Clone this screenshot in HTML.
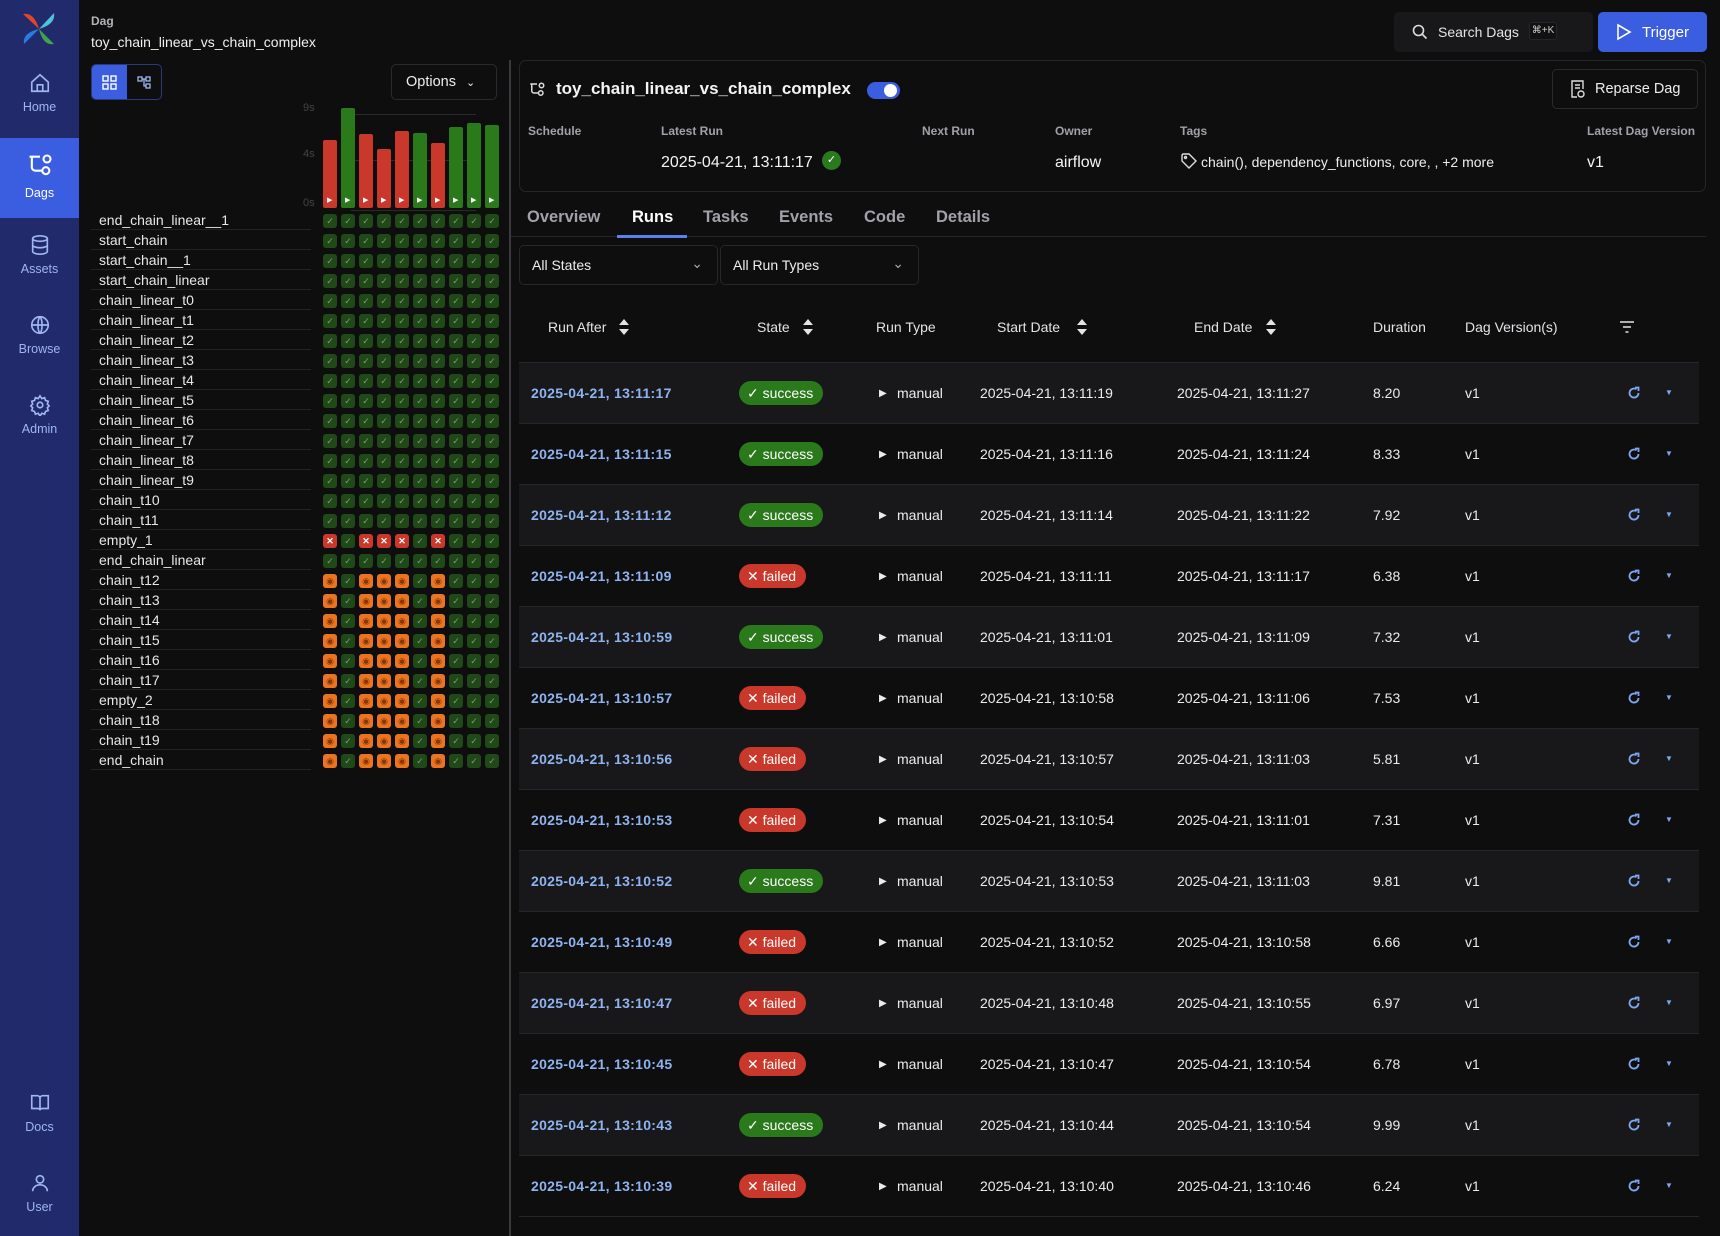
<!DOCTYPE html>
<html><head><meta charset="utf-8">
<style>
*{box-sizing:border-box;margin:0;padding:0}
body{width:1720px;height:1236px;overflow:hidden;background:#0e0e0f;font-family:"Liberation Sans",sans-serif;color:#e4e4e7;position:relative}
.abs{position:absolute}
.side{position:absolute;left:0;top:0;width:79px;height:1236px;background:#212a6a}
.nav{position:absolute;left:0;width:79px;text-align:center;color:#9fb6f2;font-size:12.5px}
.nav svg{display:block;margin:0 auto 6px}
.nav.act{background:#3b5de0;color:#fff;height:80px;top:138px;padding-top:14px}
.names div{position:absolute;left:91px;width:220px;height:20px;border-bottom:1px solid #222;font-size:14px;line-height:20px;padding-left:8px;color:#e8e8e8}
.grid i{position:absolute;width:14px;height:14px;border-radius:3px;font-style:normal;font-size:9px;line-height:14px;text-align:center}
.s{background:#1f4a17;color:#7d9a7a}
.f{background:#c9382b;color:#fff;font-weight:bold}
.o{background:#ea7422;color:#8a3505}
.lab{font-size:12px;color:#a1a1aa;font-weight:bold;position:absolute;top:124px}
.val{font-size:16px;color:#f4f4f5;position:absolute;top:154px}
.tab{position:absolute;top:208px;font-size:16.5px;font-weight:bold;color:#a1a1aa}
.sel{position:absolute;top:245px;height:40px;border:1px solid #27272a;border-radius:5px;font-size:14px;color:#eee;padding:11px 12px}
.th{position:absolute;top:319px;font-size:14px;color:#e4e4e7}
.row{position:absolute;left:519px;width:1180px;height:61px;border-bottom:1px solid #26262a}
.row.a{background:#18181b}
.row span{position:absolute;top:22px;font-size:14px;color:#ececec}
.row .ra{left:12px;color:#8fb3ef;font-weight:bold;letter-spacing:.3px}
.b{position:absolute;top:18px;height:24px;border-radius:12px;font-size:14px;color:#fff;padding:4px 10px 0 8px;line-height:16px}
.bs{background:#2a7a1c}.bf{background:#c9382b}
</style></head><body>
<div class="side">
<svg class="abs" style="left:20px;top:10px" width="38" height="38" viewBox="0 0 38 38"><path d="M19 19 L3 4 Q14 2 19 19Z" fill="#e0452b"/><path d="M19 19 L34 3 Q36 14 19 19Z" fill="#4fc3d9"/><path d="M19 19 L34 34 Q23 36 19 19Z" fill="#3fa34d"/><path d="M19 19 L4 34 Q2 23 19 19Z" fill="#2a7be0"/></svg>
<div class="nav" style="top:72px"><svg width="22" height="22" viewBox="0 0 24 24" fill="none" stroke="#9fb6f2" stroke-width="1.8"><path d="M3 11 L12 3 L21 11 V21 H3Z"/><path d="M9 21V14h6v7"/></svg>Home</div>
<div class="nav act"><svg width="28" height="28" viewBox="0 0 24 24" fill="none" stroke="#fff" stroke-width="1.8"><path d="M3 4h9M5 4v9a3 3 0 0 0 3 3h6"/><circle cx="18" cy="6" r="3"/><circle cx="17" cy="16" r="3"/></svg>Dags</div>
<div class="nav" style="top:234px"><svg width="22" height="22" viewBox="0 0 24 24" fill="none" stroke="#9fb6f2" stroke-width="1.8"><ellipse cx="12" cy="5" rx="8" ry="3"/><path d="M4 5v14c0 1.7 3.6 3 8 3s8-1.3 8-3V5M4 12c0 1.7 3.6 3 8 3s8-1.3 8-3"/></svg>Assets</div>
<div class="nav" style="top:314px"><svg width="22" height="22" viewBox="0 0 24 24" fill="none" stroke="#9fb6f2" stroke-width="1.8"><circle cx="12" cy="12" r="9"/><path d="M3 12h18M12 3c3 3 3 15 0 18M12 3c-3 3-3 15 0 18"/></svg>Browse</div>
<div class="nav" style="top:394px"><svg width="22" height="22" viewBox="0 0 24 24" fill="none" stroke="#9fb6f2" stroke-width="1.8"><circle cx="12" cy="12" r="3"/><path d="M12 2l2 3 3-1 1 3 3 1-1 3 2 2-2 2 1 3-3 1-1 3-3-1-2 3-2-3-3 1-1-3-3-1 1-3-2-2 2-2-1-3 3-1 1-3 3 1z"/></svg>Admin</div>
<div class="nav" style="top:1092px"><svg width="22" height="22" viewBox="0 0 24 24" fill="none" stroke="#9fb6f2" stroke-width="1.8"><path d="M3 4h6a3 3 0 0 1 3 3v13a2 2 0 0 0-2-2H3zM21 4h-6a3 3 0 0 0-3 3v13a2 2 0 0 1 2-2h7z"/></svg>Docs</div>
<div class="nav" style="top:1172px"><svg width="22" height="22" viewBox="0 0 24 24" fill="none" stroke="#9fb6f2" stroke-width="1.8"><circle cx="12" cy="8" r="4"/><path d="M4 21c0-4 3.6-7 8-7s8 3 8 7"/></svg>User</div>
</div>

<div class="abs" style="left:91px;top:14px;font-size:12px;font-weight:bold;color:#b4b4b8">Dag</div>
<div class="abs" style="left:91px;top:34px;font-size:14px;color:#f0f0f0">toy_chain_linear_vs_chain_complex</div>

<div class="abs" style="left:91px;top:64px;width:71px;height:36px;border:1px solid #2a3a7a;border-radius:5px;overflow:hidden">
<div class="abs" style="left:0;top:0;width:35px;height:36px;background:#3b5de0"></div>
<svg class="abs" style="left:10px;top:10px" width="15" height="15" viewBox="0 0 15 15" fill="none" stroke="#fff" stroke-width="1.4"><rect x="1" y="1" width="5" height="5"/><rect x="9" y="1" width="5" height="5"/><rect x="1" y="9" width="5" height="5"/><rect x="9" y="9" width="5" height="5"/></svg>
<svg class="abs" style="left:45px;top:11px" width="15" height="14" viewBox="0 0 15 14" fill="none" stroke="#9fb6f2" stroke-width="1.3"><rect x="1" y="1" width="4" height="4"/><rect x="9" y="1" width="4" height="4"/><rect x="9" y="8" width="4" height="4"/><path d="M5 3h4M7 3v7h2"/></svg>
</div>
<div class="abs" style="left:391px;top:64px;width:106px;height:36px;border:1px solid #2a2a2e;border-radius:5px;font-size:14.5px;padding:9px 0 0 14px;color:#eee">Options <span style="font-size:11px;margin-left:6px">&#8964;</span></div>

<div class="abs" style="left:303px;top:102px;font-size:11px;color:#444">9s</div>
<div class="abs" style="left:303px;top:148px;font-size:11px;color:#444">4s</div>
<div class="abs" style="left:303px;top:197px;font-size:11px;color:#444">0s</div>
<div class="abs" style="left:351px;top:114px;width:125px;height:1px;background:#2a2a2a"></div>
<div class="abs" style="left:351px;top:160px;width:125px;height:1px;background:#2a2a2a"></div>
<div class="abs" style="left:351px;top:210px;width:125px;height:1px;background:#2a2a2a"></div>
<div class="abs" style="left:323px;top:140px;width:14px;height:68px;background:#c9382b;border-radius:2px"></div>
<div class="abs" style="left:341px;top:108px;width:14px;height:100px;background:#2a7a1c;border-radius:2px"></div>
<div class="abs" style="left:359px;top:134px;width:14px;height:74px;background:#c9382b;border-radius:2px"></div>
<div class="abs" style="left:377px;top:149px;width:14px;height:59px;background:#c9382b;border-radius:2px"></div>
<div class="abs" style="left:395px;top:131px;width:14px;height:77px;background:#c9382b;border-radius:2px"></div>
<div class="abs" style="left:413px;top:133px;width:14px;height:75px;background:#2a7a1c;border-radius:2px"></div>
<div class="abs" style="left:431px;top:143px;width:14px;height:65px;background:#c9382b;border-radius:2px"></div>
<div class="abs" style="left:449px;top:127px;width:14px;height:81px;background:#2a7a1c;border-radius:2px"></div>
<div class="abs" style="left:467px;top:123px;width:14px;height:85px;background:#2a7a1c;border-radius:2px"></div>
<div class="abs" style="left:485px;top:125px;width:14px;height:83px;background:#2a7a1c;border-radius:2px"></div>
<div class="abs" style="left:323px;top:196px;width:176px;font-size:7px;color:#fff;letter-spacing:0">
<span style="position:absolute;left:4px">&#9654;</span><span style="position:absolute;left:22px">&#9654;</span><span style="position:absolute;left:40px">&#9654;</span><span style="position:absolute;left:58px">&#9654;</span><span style="position:absolute;left:76px">&#9654;</span><span style="position:absolute;left:94px">&#9654;</span><span style="position:absolute;left:112px">&#9654;</span><span style="position:absolute;left:130px">&#9654;</span><span style="position:absolute;left:148px">&#9654;</span><span style="position:absolute;left:166px">&#9654;</span></div>

<div class="names">
<div style="top:210px">end_chain_linear__1</div><div style="top:230px">start_chain</div><div style="top:250px">start_chain__1</div><div style="top:270px">start_chain_linear</div><div style="top:290px">chain_linear_t0</div><div style="top:310px">chain_linear_t1</div><div style="top:330px">chain_linear_t2</div><div style="top:350px">chain_linear_t3</div><div style="top:370px">chain_linear_t4</div><div style="top:390px">chain_linear_t5</div><div style="top:410px">chain_linear_t6</div><div style="top:430px">chain_linear_t7</div><div style="top:450px">chain_linear_t8</div><div style="top:470px">chain_linear_t9</div><div style="top:490px">chain_t10</div><div style="top:510px">chain_t11</div><div style="top:530px">empty_1</div><div style="top:550px">end_chain_linear</div><div style="top:570px">chain_t12</div><div style="top:590px">chain_t13</div><div style="top:610px">chain_t14</div><div style="top:630px">chain_t15</div><div style="top:650px">chain_t16</div><div style="top:670px">chain_t17</div><div style="top:690px">empty_2</div><div style="top:710px">chain_t18</div><div style="top:730px">chain_t19</div><div style="top:750px">end_chain</div>
</div>
<div class="grid" id="grid"></div>
<script>
(function(){var g=document.getElementById('grid'),h='';
for(var r=0;r<28;r++){for(var c=0;c<10;c++){var t='s',ch='&#10003;';
if(r==16&&[0,2,3,4,6].indexOf(c)>=0){t='f';ch='&#10005;'}
if(r>=18&&[0,2,3,4,6].indexOf(c)>=0){t='o';ch='&#9673;'}
h+='<i class="'+t+'" style="left:'+(323+c*18)+'px;top:'+(214+r*20)+'px">'+ch+'</i>';}}
g.innerHTML=h;})();
</script>

<div class="abs" style="left:509px;top:60px;width:2px;height:1176px;background:#3a3a3e"></div>

<div class="abs" style="left:1394px;top:12px;width:199px;height:40px;background:#18181b;border-radius:5px"></div>
<svg class="abs" style="left:1412px;top:24px" width="16" height="16" viewBox="0 0 16 16" fill="none" stroke="#ddd" stroke-width="1.6"><circle cx="6.5" cy="6.5" r="5"/><path d="M10.5 10.5l4 4"/></svg>
<div class="abs" style="left:1438px;top:24px;font-size:14px;color:#e4e4e7">Search Dags</div>
<div class="abs" style="left:1529px;top:22px;width:28px;height:18px;background:#111;border:1px solid #26262a;border-radius:3px;font-size:10px;color:#ccc;text-align:center;line-height:16px">&#8984;+K</div>
<div class="abs" style="left:1598px;top:12px;width:109px;height:40px;background:#3b5de0;border-radius:5px"></div>
<svg class="abs" style="left:1616px;top:23px" width="16" height="18" viewBox="0 0 16 18" fill="none" stroke="#fff" stroke-width="1.6"><path d="M2 2l12 7-12 7z"/></svg>
<div class="abs" style="left:1642px;top:24px;font-size:15px;color:#fff">Trigger</div>

<div class="abs" style="left:519px;top:60px;width:1187px;height:132px;border:1px solid #26262a;border-radius:7px"></div>
<svg class="abs" style="left:528px;top:81px" width="18" height="18" viewBox="0 0 24 24" fill="none" stroke="#ddd" stroke-width="2"><path d="M3 4h9M5 4v9a3 3 0 0 0 3 3h6"/><circle cx="18" cy="6" r="3"/><circle cx="17" cy="16" r="3"/></svg>
<div class="abs" style="left:556px;top:79px;font-size:17px;font-weight:bold;color:#f4f4f5">toy_chain_linear_vs_chain_complex</div>
<div class="abs" style="left:867px;top:82px;width:33px;height:17px;background:#3b5de0;border-radius:9px"><div class="abs" style="left:17px;top:2px;width:13px;height:13px;background:#fff;border-radius:50%"></div></div>
<div class="abs" style="left:1552px;top:69px;width:146px;height:40px;border:1px solid #2a2a2e;border-radius:5px"></div>
<svg class="abs" style="left:1570px;top:80px" width="16" height="19" viewBox="0 0 16 19" fill="none" stroke="#ddd" stroke-width="1.4"><path d="M7 17H2V1h11v8"/><path d="M5 5h5M5 8h5"/><circle cx="11" cy="14" r="3"/></svg>
<div class="abs" style="left:1595px;top:81px;font-size:14.5px;color:#eee">Reparse Dag</div>
<div class="lab" style="left:528px">Schedule</div>
<div class="lab" style="left:661px">Latest Run</div>
<div class="lab" style="left:922px">Next Run</div>
<div class="lab" style="left:1055px">Owner</div>
<div class="lab" style="left:1180px">Tags</div>
<div class="lab" style="left:1587px">Latest Dag Version</div>
<div class="val" style="left:661px">2025-04-21, 13:11:17</div>
<div class="abs" style="left:822px;top:151px;width:19px;height:19px;border-radius:50%;background:#2a7a1c;color:#fff;font-size:11px;text-align:center;line-height:19px">&#10003;</div>
<div class="val" style="left:1055px">airflow</div>
<svg class="abs" style="left:1181px;top:153px" width="16" height="16" viewBox="0 0 16 16" fill="none" stroke="#ddd" stroke-width="1.4"><path d="M1 2v6l7 7 7-7-7-7H2z"/><circle cx="4.5" cy="4.5" r="1"/></svg>
<div class="abs" style="left:1201px;top:154px;font-size:14px;color:#eee">chain(), dependency_functions, core, , +2 more</div>
<div class="val" style="left:1587px">v1</div>

<div class="tab" style="left:527px">Overview</div>
<div class="tab" style="left:632px;color:#fff">Runs</div>
<div class="tab" style="left:703px">Tasks</div>
<div class="tab" style="left:779px">Events</div>
<div class="tab" style="left:864px">Code</div>
<div class="tab" style="left:936px">Details</div>
<div class="abs" style="left:511px;top:236px;width:1195px;height:1px;background:#26262a"></div>
<div class="abs" style="left:617px;top:235px;width:70px;height:3px;background:#5b82ea"></div>

<div class="sel" style="left:519px;width:199px">All States<span style="position:absolute;right:14px;top:9px;color:#aaa">&#8964;</span></div>
<div class="sel" style="left:720px;width:199px">All Run Types<span style="position:absolute;right:14px;top:9px;color:#aaa">&#8964;</span></div>

<div class="th" style="left:548px">Run After</div>
<div class="th" style="left:757px">State</div>
<div class="th" style="left:876px">Run Type</div>
<div class="th" style="left:997px">Start Date</div>
<div class="th" style="left:1194px">End Date</div>
<div class="th" style="left:1373px">Duration</div>
<div class="th" style="left:1465px">Dag Version(s)</div>
<svg class="abs" style="left:619px;top:319px" width="10" height="16" viewBox="0 0 10 16" fill="#e4e4e7"><path d="M5 0l5 6H0zM5 16l5-6H0z"/></svg>
<svg class="abs" style="left:803px;top:319px" width="10" height="16" viewBox="0 0 10 16" fill="#e4e4e7"><path d="M5 0l5 6H0zM5 16l5-6H0z"/></svg>
<svg class="abs" style="left:1077px;top:319px" width="10" height="16" viewBox="0 0 10 16" fill="#e4e4e7"><path d="M5 0l5 6H0zM5 16l5-6H0z"/></svg>
<svg class="abs" style="left:1266px;top:319px" width="10" height="16" viewBox="0 0 10 16" fill="#e4e4e7"><path d="M5 0l5 6H0zM5 16l5-6H0z"/></svg>
<svg class="abs" style="left:1620px;top:321px" width="14" height="12" viewBox="0 0 14 12" fill="none" stroke="#e4e4e7" stroke-width="1.6"><path d="M0 1h14M3 6h8M5.5 11h3"/></svg>
<div class="abs" style="left:519px;top:362px;width:1180px;height:1px;background:#26262a"></div>

<div id="rows"></div>
<script>
(function(){var d=[
["13:11:17",1,"13:11:19","13:11:27","8.20"],["13:11:15",1,"13:11:16","13:11:24","8.33"],["13:11:12",1,"13:11:14","13:11:22","7.92"],["13:11:09",0,"13:11:11","13:11:17","6.38"],["13:10:59",1,"13:11:01","13:11:09","7.32"],["13:10:57",0,"13:10:58","13:11:06","7.53"],["13:10:56",0,"13:10:57","13:11:03","5.81"],["13:10:53",0,"13:10:54","13:11:01","7.31"],["13:10:52",1,"13:10:53","13:11:03","9.81"],["13:10:49",0,"13:10:52","13:10:58","6.66"],["13:10:47",0,"13:10:48","13:10:55","6.97"],["13:10:45",0,"13:10:47","13:10:54","6.78"],["13:10:43",1,"13:10:44","13:10:54","9.99"],["13:10:39",0,"13:10:40","13:10:46","6.24"]];
var h='';for(var i=0;i<d.length;i++){var r=d[i],p='2025-04-21, ';
h+='<div class="row'+(i%2==0?' a':'')+'" style="top:'+(363+i*61)+'px"><span class="ra">'+p+r[0]+'</span>'+
(r[1]?'<div class="b bs" style="left:220px">&#10003; success</div>':'<div class="b bf" style="left:220px">&#10005; failed</div>')+
'<span style="left:360px;font-size:10px;top:25px">&#9654;</span><span style="left:378px">manual</span><span style="left:461px">'+p+r[2]+'</span><span style="left:658px">'+p+r[3]+'</span><span style="left:854px">'+r[4]+'</span><span style="left:946px">v1</span>'+
'<svg style="position:absolute;left:1108px;top:23px" width="14" height="14" viewBox="0 0 14 14" fill="none" stroke="#7fa6f0" stroke-width="1.8"><path d="M11.5 7A4.5 4.5 0 1 1 9.5 3.3"/><path d="M8 1.5h3.5V5" /></svg>'+
'<span style="left:1146px;font-size:8px;top:25px;color:#7fa6f0">&#9660;</span></div>';}
document.getElementById('rows').innerHTML=h;})();
</script>
</body></html>
